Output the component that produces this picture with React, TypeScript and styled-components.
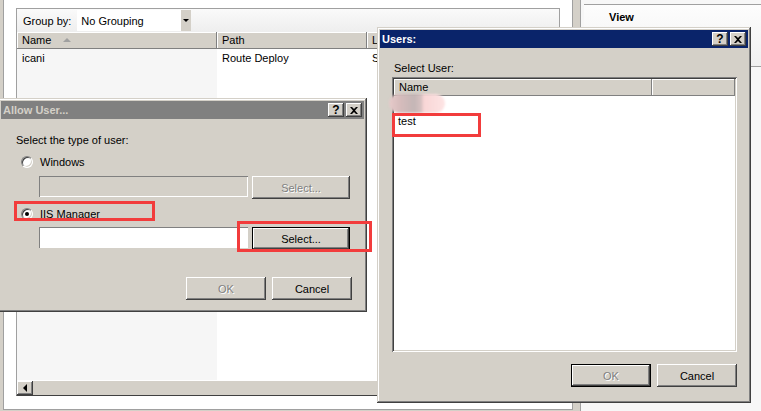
import styled, { createGlobalStyle, css } from 'styled-components'

const FACE = '#d4d0c8'
const SHADOW = '#808080'
const DARK = '#404040'
const LINE = '#a0a0a0'
const RED = '#f23c3c'

const GlobalStyle = createGlobalStyle`
  html, body {
    margin: 0;
    padding: 0;
  }
  body {
    width: 761px;
    height: 411px;
    overflow: hidden;
    font-family: 'Liberation Sans', Arial, sans-serif;
    font-size: 11px;
    color: #000;
  }
`

const raised = css`
  box-shadow: inset -1px -1px ${DARK}, inset 1px 1px #fff, inset -2px -2px ${SHADOW},
    inset 2px 2px ${FACE};
`

const sunken = css`
  box-shadow: inset 1px 1px ${SHADOW}, inset -1px -1px #fff, inset 2px 2px ${DARK},
    inset -2px -2px ${FACE};
`

const Desktop = styled.div`
  position: relative;
  width: 761px;
  height: 411px;
  overflow: hidden;
  background: ${FACE};
`

const Workspace = styled.div`
  display: flex;
  height: 100%;
  padding-left: 3px;
  box-sizing: border-box;
`

const LeftPanel = styled.div`
  width: 570px;
  height: 410px;
  box-sizing: border-box;
  border: 1px solid ${LINE};
  border-top: none;
  background: #fff;
  padding: 8px 0 0 12px;
`

const ListFrame = styled.div`
  width: 544px;
  height: 388px;
  box-sizing: border-box;
  border: 1px solid ${LINE};
  border-bottom-color: ${DARK};
  display: flex;
  flex-direction: column;
`

const Toolbar = styled.div`
  height: 23px;
  flex: none;
  display: flex;
  align-items: center;
  gap: 6px;
  padding-left: 6px;
  background: linear-gradient(180deg, #fafafa 0%, #eeeeee 100%);
`

const GroupSelect = styled.div`
  width: 114px;
  height: 21px;
  display: flex;
  align-items: center;
  background: #fff;
  padding-left: 4px;
  box-sizing: border-box;

  span {
    flex: 1;
  }
`

const DropArrow = styled.div`
  width: 10px;
  height: 100%;
  background: ${FACE};
  display: grid;
  place-items: center;

  &::after {
    content: '';
    border-left: 3px solid transparent;
    border-right: 3px solid transparent;
    border-top: 3px solid #000;
  }
`

const HeaderRow = styled.div`
  height: 17px;
  flex: none;
  display: flex;
  background: ${FACE};
  border-bottom: 1px solid ${SHADOW};
  box-sizing: border-box;
`

const HeaderCell = styled.div<{ $width?: number }>`
  width: ${(p) => (p.$width ? `${p.$width}px` : 'auto')};
  flex: ${(p) => (p.$width ? 'none' : 1)};
  display: flex;
  align-items: center;
  gap: 12px;
  padding-left: 5px;
  box-sizing: border-box;
  border-right: 1px solid ${SHADOW};
  box-shadow: inset 1px 1px #fff;
  white-space: nowrap;
  overflow: hidden;
`

const SortArrow = styled.span`
  width: 0;
  height: 0;
  border-left: 4px solid transparent;
  border-right: 4px solid transparent;
  border-bottom: 4px solid ${LINE};
`

const ListBody = styled.div`
  flex: 1;
  display: flex;
  min-height: 0;
`

const Column = styled.div<{ $width?: number; $sorted?: boolean }>`
  width: ${(p) => (p.$width ? `${p.$width}px` : 'auto')};
  flex: ${(p) => (p.$width ? 'none' : 1)};
  background: ${(p) => (p.$sorted ? '#f6f6f6' : '#fff')};
  padding-top: 1px;
  overflow: hidden;
`

const Cell = styled.div`
  height: 16px;
  line-height: 16px;
  padding-left: 5px;
  white-space: nowrap;
`

const HScrollbar = styled.div`
  height: 15px;
  flex: none;
  display: flex;
  background: ${FACE};
  border-top: 1px solid #fff;
  box-sizing: border-box;
`

const ScrollButton = styled.div`
  width: 16px;
  height: 100%;
  display: grid;
  place-items: center;
  ${raised}

  &::after {
    content: '';
    border-top: 4px solid transparent;
    border-bottom: 4px solid transparent;
    border-right: 4px solid #000;
  }
`

const Splitter = styled.div`
  width: 7px;
  flex: none;
  background: ${FACE};
`

const ActionsPanel = styled.div`
  flex: 1;
  background: #f7f7f7;
  border-left: 1px solid ${LINE};
  padding-top: 4px;
  padding-left: 3px;
`

const ActionsHeader = styled.div`
  height: 63px;
  box-sizing: border-box;
  border-top: 1px solid ${LINE};
  border-bottom: 1px solid ${LINE};
  background: linear-gradient(180deg, #fdfdfd 0%, #f0f0f0 100%);
  padding: 6px 0 0 25px;
  font-weight: bold;
`

const Window = styled.div<{ $left: number; $top: number; $width: number; $height: number }>`
  position: absolute;
  left: ${(p) => p.$left}px;
  top: ${(p) => p.$top}px;
  width: ${(p) => p.$width}px;
  height: ${(p) => p.$height}px;
  box-sizing: border-box;
  padding: 3px;
  background: ${FACE};
  box-shadow: inset -1px -1px ${DARK}, inset 1px 1px ${FACE}, inset -2px -2px ${SHADOW},
    inset 2px 2px #fff;
  display: flex;
  flex-direction: column;
`

const TitleBar = styled.div<{ $active?: boolean }>`
  height: 18px;
  flex: none;
  display: flex;
  align-items: center;
  justify-content: space-between;
  padding: 0 2px;
  background: ${(p) => (p.$active ? '#0a246a' : SHADOW)};
  color: ${(p) => (p.$active ? '#fff' : FACE)};
  font-weight: bold;
`

const CaptionButtons = styled.div`
  display: flex;
  gap: 2px;
`

const CaptionButton = styled.div`
  width: 16px;
  height: 14px;
  display: grid;
  place-items: center;
  background: ${FACE};
  color: #000;
  font-weight: bold;
  font-size: 12px;
  line-height: 14px;
  ${raised}
`

const DialogBody = styled.div<{ $pad: string }>`
  flex: 1;
  padding: ${(p) => p.$pad};
  display: flex;
  flex-direction: column;
`

const Prompt = styled.div<{ $mt: number; $indent?: number }>`
  margin-top: ${(p) => p.$mt}px;
  margin-left: ${(p) => p.$indent ?? 0}px;
  line-height: 13px;
`

const Option = styled.label<{ $mt: number }>`
  margin-top: ${(p) => p.$mt}px;
  margin-left: 5px;
  height: 13px;
  display: flex;
  align-items: center;
  gap: 7px;
`

const Radio = styled.span<{ $checked?: boolean }>`
  width: 12px;
  height: 12px;
  box-sizing: border-box;
  border-radius: 50%;
  background: #fff;
  border: 1px solid;
  border-color: ${SHADOW} #fff #fff ${SHADOW};
  box-shadow: inset 1px 1px ${DARK}, inset -1px -1px ${FACE};
  display: grid;
  place-items: center;

  &::after {
    content: '';
    width: 4px;
    height: 4px;
    border-radius: 50%;
    background: #000;
    display: ${(p) => (p.$checked ? 'block' : 'none')};
  }
`

const FieldRow = styled.div<{ $mt: number }>`
  margin-top: ${(p) => p.$mt}px;
  margin-left: 23px;
  display: flex;
  align-items: flex-start;
  gap: 4px;
`

const TextField = styled.input`
  width: 209px;
  height: 21px;
  box-sizing: border-box;
  border: none;
  outline: none;
  padding: 0 3px;
  font: inherit;
  background: #fff;
  box-shadow: inset 1px 1px ${SHADOW}, inset -1px -1px #fff;

  &:disabled {
    background: ${FACE};
  }
`

const Button = styled.button<{ $width: number; $default?: boolean }>`
  width: ${(p) => p.$width}px;
  height: 23px;
  box-sizing: border-box;
  padding: 0;
  font: inherit;
  color: #000;
  background: ${FACE};
  border: ${(p) => (p.$default ? '1px solid #000' : 'none')};
  ${raised}

  &:disabled {
    color: ${SHADOW};
    text-shadow: 1px 1px #fff;
  }
`

const ButtonRow = styled.div<{ $mt: number }>`
  margin-top: ${(p) => p.$mt}px;
  display: flex;
  justify-content: flex-end;
  gap: 6px;
`

const UserList = styled.div`
  margin-top: 2px;
  height: 275px;
  box-sizing: border-box;
  padding: 2px;
  background: #fff;
  display: flex;
  flex-direction: column;
  ${sunken}
`

const UserRow = styled.div`
  height: 17px;
  line-height: 17px;
  padding-left: 4px;
  display: flex;
  align-items: center;
`

const Redacted = styled.span`
  width: 56px;
  height: 19px;
  margin: -3px 0 0 -9px;
  border-radius: 10px;
  background: linear-gradient(
    90deg,
    #e6caca 0%,
    #d6bcbc 20%,
    #c4b6b6 45%,
    #d8c2c2 58%,
    #f8d6d6 62%,
    #fde4e4 100%
  );
  filter: blur(1.2px);
`

const Highlight = styled.div<{ $left: number; $top: number; $width: number; $height: number }>`
  position: absolute;
  left: ${(p) => p.$left}px;
  top: ${(p) => p.$top}px;
  width: ${(p) => p.$width}px;
  height: ${(p) => p.$height}px;
  box-sizing: border-box;
  border: 3px solid ${RED};
  pointer-events: none;
`

const CloseGlyph = () => (
  <svg width="8" height="7" viewBox="0 0 8 7">
    <path d="M0 0h2l2 2 2-2h2L5 3.5 8 7H6L4 5 2 7H0l3-3.5z" fill="#000" />
  </svg>
)

const Caption = () => (
  <CaptionButtons>
    <CaptionButton>?</CaptionButton>
    <CaptionButton>
      <CloseGlyph />
    </CaptionButton>
  </CaptionButtons>
)

const App = () => {
  return (
    <Desktop>
      <GlobalStyle />
      <Workspace>
        <LeftPanel>
          <ListFrame>
            <Toolbar>
              <span>Group by:</span>
              <GroupSelect>
                <span>No Grouping</span>
                <DropArrow />
              </GroupSelect>
            </Toolbar>
            <HeaderRow>
              <HeaderCell $width={200}>
                Name <SortArrow />
              </HeaderCell>
              <HeaderCell $width={150}>Path</HeaderCell>
              <HeaderCell>L</HeaderCell>
            </HeaderRow>
            <ListBody>
              <Column $width={200} $sorted>
                <Cell>icani</Cell>
              </Column>
              <Column $width={150}>
                <Cell>Route Deploy</Cell>
              </Column>
              <Column>
                <Cell>S</Cell>
              </Column>
            </ListBody>
            <HScrollbar>
              <ScrollButton />
            </HScrollbar>
          </ListFrame>
        </LeftPanel>
        <Splitter />
        <ActionsPanel>
          <ActionsHeader>View</ActionsHeader>
        </ActionsPanel>
      </Workspace>

      <Window $left={-2} $top={98} $width={369} $height={214}>
        <TitleBar>
          <span>Allow User...</span>
          <Caption />
        </TitleBar>
        <DialogBody $pad="0 12px 0 15px">
          <Prompt $mt={15}>Select the type of user:</Prompt>
          <Option $mt={8}>
            <Radio />
            Windows
          </Option>
          <FieldRow $mt={8}>
            <TextField disabled />
            <Button $width={98} disabled>
              Select...
            </Button>
          </FieldRow>
          <Option $mt={8}>
            <Radio $checked />
            IIS Manager
          </Option>
          <FieldRow $mt={7}>
            <TextField readOnly />
            <Button $width={98} $default>
              Select...
            </Button>
          </FieldRow>
          <ButtonRow $mt={27}>
            <Button $width={80} disabled>
              OK
            </Button>
            <Button $width={80}>Cancel</Button>
          </ButtonRow>
        </DialogBody>
        <Highlight $left={16} $top={103} $width={141} $height={20} />
        <Highlight $left={239} $top={123} $width={135} $height={31} />
      </Window>

      <Window $left={377} $top={27} $width={374} $height={376}>
        <TitleBar $active>
          <span>Users:</span>
          <Caption />
        </TitleBar>
        <DialogBody $pad="0 11px 0 12px">
          <Prompt $mt={14} $indent={2}>
            Select User:
          </Prompt>
          <UserList>
            <HeaderRow>
              <HeaderCell $width={258}>Name</HeaderCell>
              <HeaderCell />
            </HeaderRow>
            <UserRow>
              <Redacted />
            </UserRow>
            <UserRow>test</UserRow>
          </UserList>
          <ButtonRow $mt={12}>
            <Button $width={80} $default disabled>
              OK
            </Button>
            <Button $width={80}>Cancel</Button>
          </ButtonRow>
        </DialogBody>
        <Highlight $left={15} $top={86} $width={89} $height={24} />
      </Window>
    </Desktop>
  )
}

export default App
